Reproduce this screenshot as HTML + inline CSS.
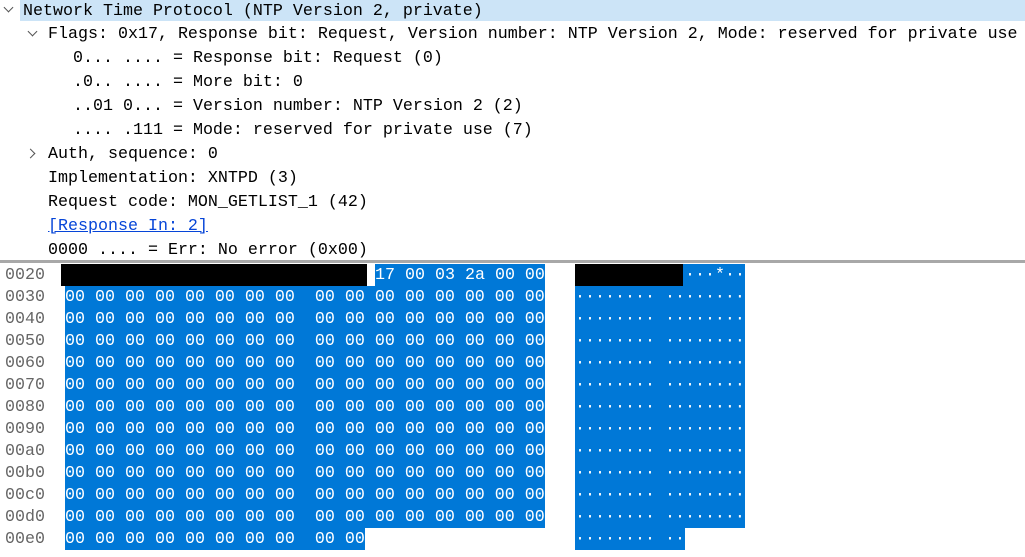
<!DOCTYPE html>
<html><head><style>
body{margin:0;width:1025px;height:557px;overflow:hidden;background:#fff;font-family:"Liberation Mono",monospace;font-size:16.67px;color:#000;position:relative}
.t{position:absolute;white-space:pre;line-height:24px;height:24px}
.h{position:absolute;white-space:pre;line-height:22px;height:22px}
.b{position:absolute;background:#0078d7}
.k{position:absolute;background:#000}
.w{color:#fff}
.o{color:#666}
.ar{position:absolute;width:6px;height:6px;border-right:1.5px solid #555;border-bottom:1.5px solid #555}
</style></head><body>
<div style="position:absolute;left:20px;top:0;width:1005px;height:21px;background:#cce4f7"></div>
<div class="ar" style="left:5px;top:4px;transform:rotate(45deg)"></div>
<div class="ar" style="left:29px;top:28px;transform:rotate(45deg)"></div>
<div class="ar" style="left:27px;top:150px;transform:rotate(-45deg)"></div>
<div class="t" style="left:23px;top:0px">Network Time Protocol (NTP Version 2, private)</div>
<div class="t" style="left:48px;top:23px">Flags: 0x17, Response bit: Request, Version number: NTP Version 2, Mode: reserved for private use</div>
<div class="t" style="left:73px;top:47px">0... .... = Response bit: Request (0)</div>
<div class="t" style="left:73px;top:71px">.0.. .... = More bit: 0</div>
<div class="t" style="left:73px;top:95px">..01 0... = Version number: NTP Version 2 (2)</div>
<div class="t" style="left:73px;top:119px">.... .111 = Mode: reserved for private use (7)</div>
<div class="t" style="left:48px;top:143px">Auth, sequence: 0</div>
<div class="t" style="left:48px;top:167px">Implementation: XNTPD (3)</div>
<div class="t" style="left:48px;top:191px">Request code: MON_GETLIST_1 (42)</div>
<div class="t" style="left:48px;top:215px;color:#0645d8;text-decoration:underline">[Response In: 2]</div>
<div class="t" style="left:48px;top:239px">0000 .... = Err: No error (0x00)</div>
<div style="position:absolute;left:0;top:260px;width:1025px;height:3px;background:#a8a8a8"></div>
<div style="position:absolute;left:0;top:263px;width:1025px;height:294px;background:#fff"></div>
<div class="k" style="left:61px;top:264px;width:306px;height:22px"></div>
<div class="b" style="left:375px;top:264px;width:170px;height:22px"></div>
<div class="k" style="left:575px;top:264px;width:108px;height:22px"></div>
<div class="b" style="left:683px;top:264px;width:62px;height:22px"></div>
<div class="b" style="left:65px;top:286px;width:480px;height:242px"></div>
<div class="b" style="left:575px;top:286px;width:170px;height:242px"></div>
<div class="b" style="left:65px;top:528px;width:300px;height:22px"></div>
<div class="b" style="left:575px;top:528px;width:110px;height:22px"></div>
<div class="h o" style="left:5px;top:265px">0020
0030
0040
0050
0060
0070
0080
0090
00a0
00b0
00c0
00d0
00e0</div>
<div class="h w" style="left:375px;top:265px">17 00 03 2a 00 00</div>
<div class="h w" style="left:685px;top:265px">···*··</div>
<div class="h w" style="left:65px;top:287px">00 00 00 00 00 00 00 00  00 00 00 00 00 00 00 00
00 00 00 00 00 00 00 00  00 00 00 00 00 00 00 00
00 00 00 00 00 00 00 00  00 00 00 00 00 00 00 00
00 00 00 00 00 00 00 00  00 00 00 00 00 00 00 00
00 00 00 00 00 00 00 00  00 00 00 00 00 00 00 00
00 00 00 00 00 00 00 00  00 00 00 00 00 00 00 00
00 00 00 00 00 00 00 00  00 00 00 00 00 00 00 00
00 00 00 00 00 00 00 00  00 00 00 00 00 00 00 00
00 00 00 00 00 00 00 00  00 00 00 00 00 00 00 00
00 00 00 00 00 00 00 00  00 00 00 00 00 00 00 00
00 00 00 00 00 00 00 00  00 00 00 00 00 00 00 00
00 00 00 00 00 00 00 00  00 00</div>
<div class="h w" style="left:575px;top:287px">········ ········
········ ········
········ ········
········ ········
········ ········
········ ········
········ ········
········ ········
········ ········
········ ········
········ ········
········ ··</div>
</body></html>
